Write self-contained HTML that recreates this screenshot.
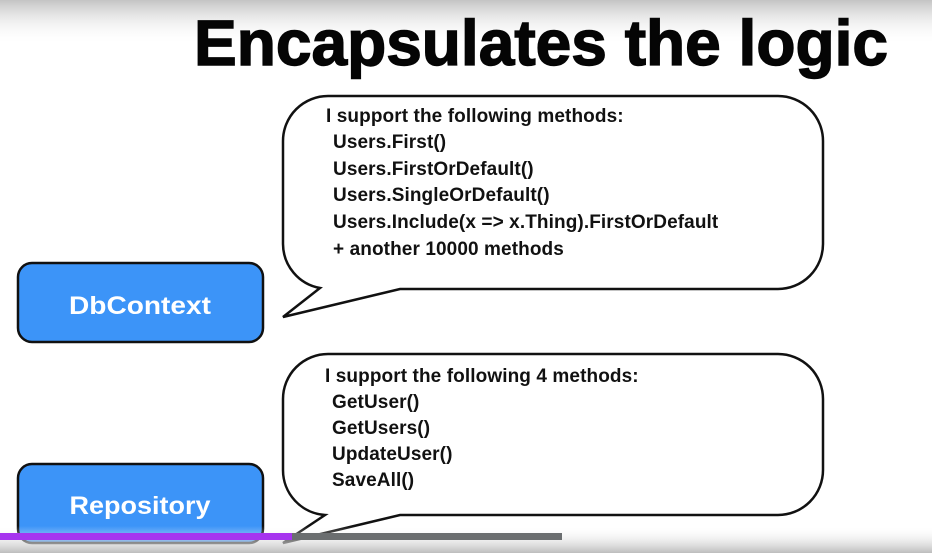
<!DOCTYPE html>
<html><head><style>
html,body{margin:0;padding:0;width:932px;height:553px;overflow:hidden;background:#fff}
svg{display:block}
text{font-family:"Liberation Sans",sans-serif;font-weight:bold;fill:#111}
</style></head><body>
<svg width="932" height="553" viewBox="0 0 932 553">
<defs>
<linearGradient id="tg" x1="0" y1="0" x2="0" y2="1"><stop offset="0" stop-color="#c4c4c4"/><stop offset="1" stop-color="#fff" stop-opacity="0"/></linearGradient>
<linearGradient id="bg" x1="0" y1="0" x2="0" y2="1"><stop offset="0" stop-color="#fff" stop-opacity="0"/><stop offset="1" stop-color="#bdbdbd"/></linearGradient>
</defs>
<rect x="0" y="0" width="932" height="45" fill="url(#tg)"/>
<text x="194" y="65" font-size="64" textLength="694" lengthAdjust="spacingAndGlyphs" style="font-weight:900;fill:#050505;stroke:#050505;stroke-width:1.4">Encapsulates the logic</text>

<rect x="18" y="263" width="245" height="79" rx="14" fill="#3c94f8" stroke="#111" stroke-width="2.5"/>
<text x="140" y="314" font-size="25" text-anchor="middle" style="fill:#fff" textLength="142" lengthAdjust="spacingAndGlyphs">DbContext</text>
<rect x="18" y="464" width="245" height="79" rx="14" fill="#3c94f8" stroke="#111" stroke-width="2.5"/>
<text x="140" y="514" font-size="25" text-anchor="middle" style="fill:#fff" textLength="141" lengthAdjust="spacingAndGlyphs">Repository</text>

<path d="M330 96 H778 A45 45 0 0 1 823 141 V244 A45 45 0 0 1 778 289 H400 L283 317 L320 288 A45 45 0 0 1 283 244 V141 A45 45 0 0 1 328 96 Z" fill="#fff" stroke="#111" stroke-width="2.5" stroke-linejoin="miter"/>
<g font-size="19" letter-spacing="0.1">
<text x="326" y="122">I support the following methods:</text>
<text x="333" y="148">Users.First()</text>
<text x="333" y="175">Users.FirstOrDefault()</text>
<text x="333" y="201">Users.SingleOrDefault()</text>
<text x="333" y="228">Users.Include(x =&gt; x.Thing).FirstOrDefault</text>
<text x="333" y="255">+ another 10000 methods</text>
</g>

<path d="M330 354 H778 A45 45 0 0 1 823 399 V470 A45 45 0 0 1 778 515 H400 L283 543 L325 515 A45 45 0 0 1 283 470 V399 A45 45 0 0 1 328 354 Z" fill="#fff" stroke="#111" stroke-width="2.5"/>
<g font-size="19" letter-spacing="0.1">
<text x="325" y="382">I support the following 4 methods:</text>
<text x="332" y="408">GetUser()</text>
<text x="332" y="434">GetUsers()</text>
<text x="332" y="460">UpdateUser()</text>
<text x="332" y="486">SaveAll()</text>
</g>

<rect x="0" y="526" width="932" height="27" fill="url(#bg)"/>
<rect x="0" y="533" width="292" height="7" fill="#a634ef"/>
<rect x="292" y="533" width="270" height="7" fill="#6b6e70"/>
</svg>
</body></html>
